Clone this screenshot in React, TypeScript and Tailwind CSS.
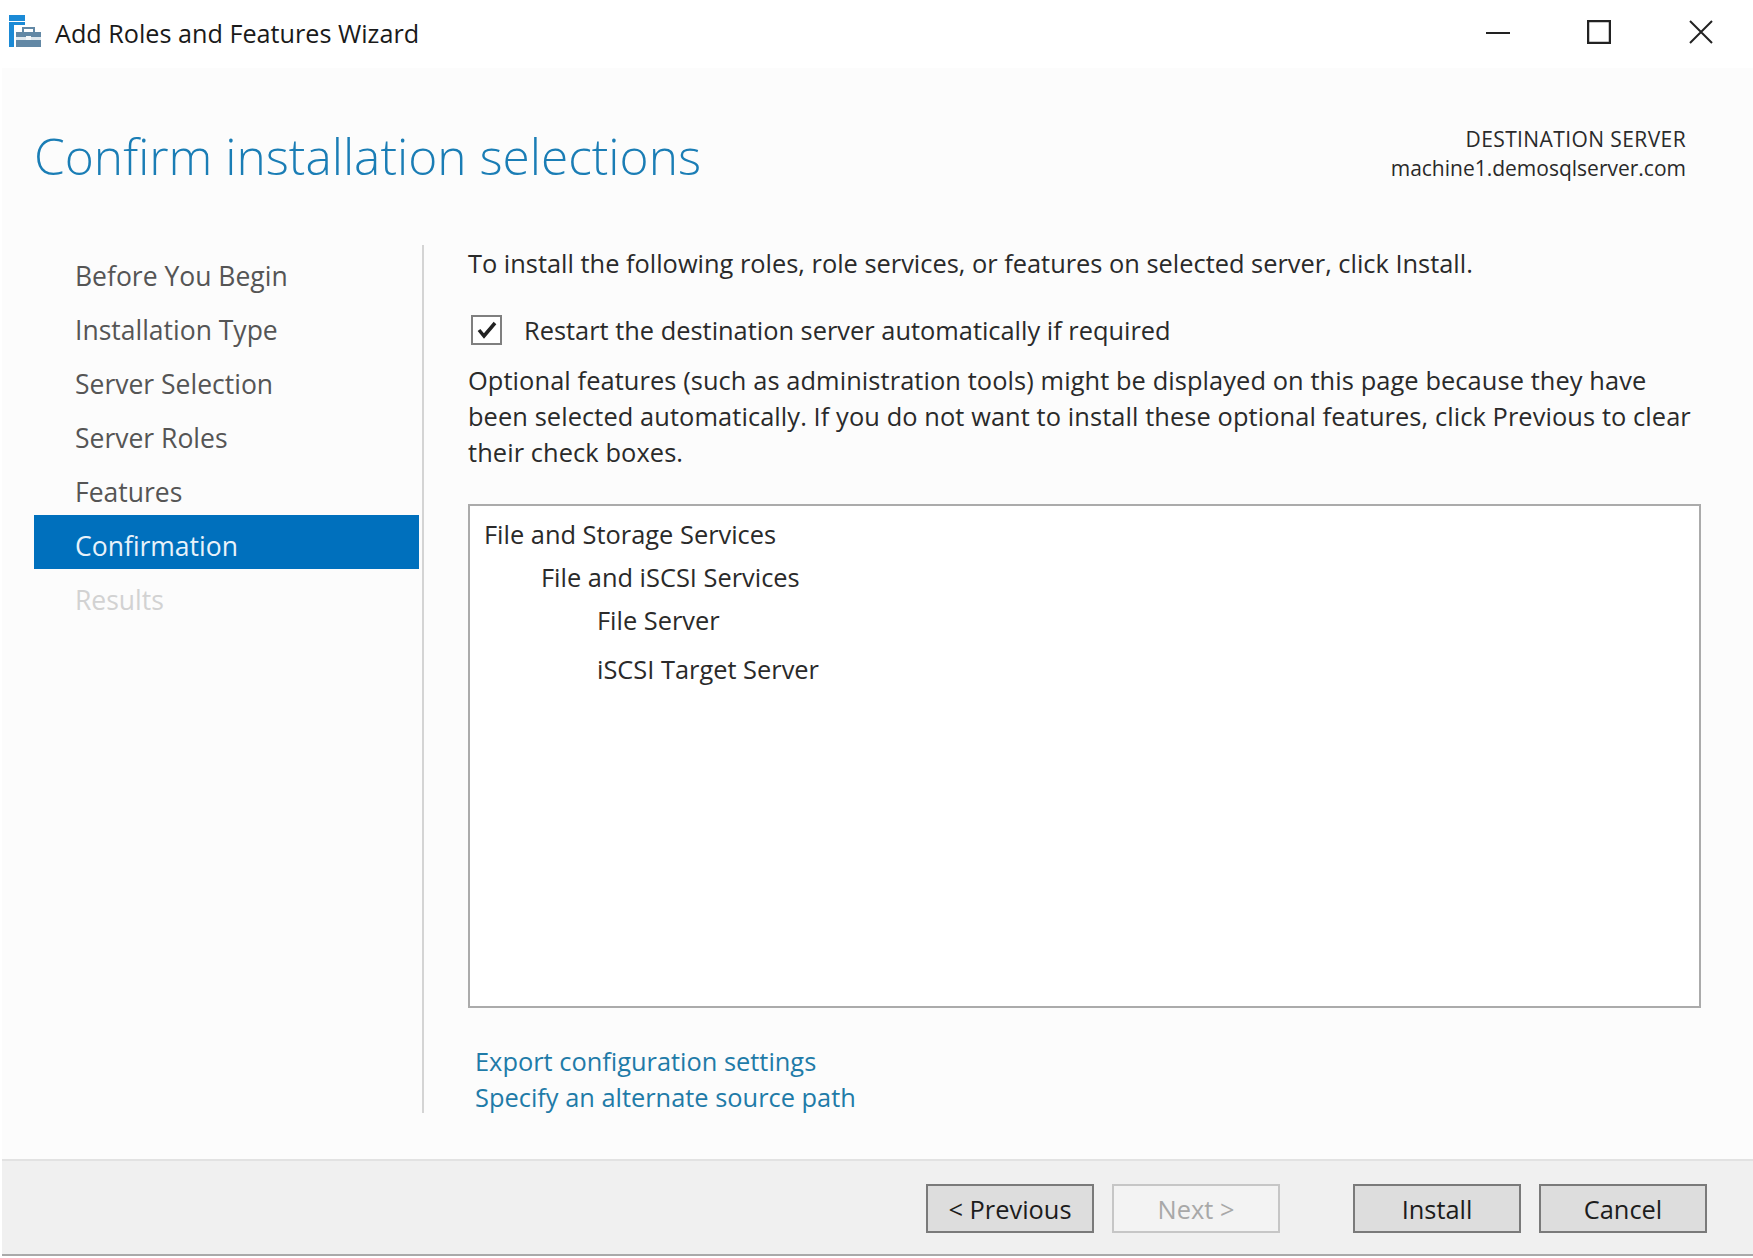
const font = "font-['Open_Sans','Noto_Sans',sans-serif]";

const steps = [
  { name: "Before You Begin", state: "normal" },
  { name: "Installation Type", state: "normal" },
  { name: "Server Selection", state: "normal" },
  { name: "Server Roles", state: "normal" },
  { name: "Features", state: "normal" },
  { name: "Confirmation", state: "active" },
  { name: "Results", state: "disabled" },
];

const tree = [
  { name: "File and Storage Services", className: "h-[43px] pl-[14px]" },
  { name: "File and iSCSI Services", className: "h-[43px] pl-[71px]" },
  { name: "File Server", className: "h-[43px] pl-[127px]" },
  { name: "iSCSI Target Server", className: "h-[55px] pl-[127px]" },
];

function AppIcon() {
  return (
    <svg width="34" height="34" viewBox="0 0 34 34" className="mb-[3px] ml-[8px] shrink-0">
      <rect x="1" y="0" width="16" height="6" fill="#1b8ad6" />
      <rect x="1" y="7" width="16" height="3" fill="#1b8ad6" />
      <rect x="1" y="10" width="5" height="22" fill="#1b8ad6" />
      <rect x="8" y="17" width="25" height="15" fill="#6288a5" />
      <rect x="8" y="22" width="25" height="3" fill="#dfe8ee" />
      <path d="M15 17v-4h11v4" fill="none" stroke="#6288a5" strokeWidth="2" />
      <rect x="18" y="21" width="5" height="4" fill="#f4f7f9" />
    </svg>
  );
}

function WindowButtons() {
  return (
    <div className="mb-[5px] flex items-center gap-[77px] pr-[40px]">
      <svg width="24" height="24" viewBox="0 0 24 24">
        <path d="M0 13h24" stroke="#222" strokeWidth="2" />
      </svg>
      <svg width="24" height="24" viewBox="0 0 24 24" className="mr-[1px]">
        <rect x="1" y="1" width="22" height="22" fill="none" stroke="#222" strokeWidth="2.5" />
      </svg>
      <svg width="24" height="24" viewBox="0 0 24 24">
        <path d="M1 1l22 22M23 1L1 23" stroke="#222" strokeWidth="2" />
      </svg>
    </div>
  );
}

function WizardButton({ label, disabled }: { label: string; disabled?: boolean }) {
  return (
    <button
      className={`flex h-[49px] w-[168px] items-center justify-center border-2 pt-[2px] text-[25.4px] ${
        disabled
          ? "border-[#c6c6c6] bg-[#f3f3f3] text-[#a8a8a8]"
          : "border-[#7a7a7a] bg-[#dddddd] text-[#1c1c1c]"
      }`}
    >
      {label}
    </button>
  );
}

export default function App() {
  return (
    <div className={`flex h-[1258px] w-[1753px] flex-col bg-white ${font}`}>
      {/* Title bar */}
      <div className="flex h-[68px] shrink-0 items-center justify-between">
        <div className="flex items-center gap-[13px]">
          <AppIcon />
          <span className="text-[25.2px] text-[#1a1a1a]">Add Roles and Features Wizard</span>
        </div>
        <WindowButtons />
      </div>

      <div className="mb-[2px] ml-[2px] flex min-h-0 flex-1 flex-col bg-[#fcfcfc]">
        {/* Header */}
        <div className="flex h-[177px] shrink-0 items-start justify-between pl-[32px] pr-[67px]">
          <h1 className="mt-[49px] text-[49.6px] font-light leading-[78px] text-[#1a7db5]">
            Confirm installation selections
          </h1>
          <div className="mt-[57px] text-right text-[21px] leading-[29px] text-[#2a2a2a]">
            <div className="tracking-[0.4px]">DESTINATION SERVER</div>
            <div>machine1.demosqlserver.com</div>
          </div>
        </div>

        <div className="flex shrink-0 items-start">
          {/* Steps */}
          <div className="flex h-[868px] w-[422px] shrink-0 flex-col border-r-2 border-[#d4d4d4] pl-[32px]">
            {steps.map((step) => (
              <div
                key={step.name}
                className={`flex h-[54px] w-[385px] items-center pl-[41px] pt-[10px] text-[26.5px] ${
                  step.state === "active"
                    ? "bg-[#0070bd] text-[#e8f2fa]"
                    : step.state === "disabled"
                      ? "text-[#d2d2d2]"
                      : "text-[#555555]"
                }`}
              >
                {step.name}
              </div>
            ))}
          </div>

          {/* Page content */}
          <div className="flex min-w-0 flex-1 flex-col pl-[44px] text-[25.4px] text-[#2a2a2a]">
            <p className="leading-[36px]">
              To install the following roles, role services, or features on selected server, click Install.
            </p>
            <label className="mt-[31px] flex h-[36px] items-center">
              <span className="ml-[3px] flex h-[30px] w-[31px] items-center justify-center border-2 border-[#7f7f7f] bg-white">
                <svg width="20" height="18" viewBox="0 0 20 18">
                  <path d="M2 9l5 6L18 2" fill="none" stroke="#222" strokeWidth="3.5" />
                </svg>
              </span>
              <span className="ml-[22px]">Restart the destination server automatically if required</span>
            </label>
            <p className="mt-[14px] whitespace-nowrap leading-[36px] tracking-[0.09px]">
              Optional features (such as administration tools) might be displayed on this page because they have
              <br />
              been selected automatically. If you do not want to install these optional features, click Previous to clear
              <br />
              their check boxes.
            </p>
            <div className="mt-[34px] h-[504px] w-[1233px] border-2 border-[#ababab] bg-white pt-[7px]">
              {tree.map((row) => (
                <div key={row.name} className={`flex items-center ${row.className}`}>
                  {row.name}
                </div>
              ))}
            </div>
            <div className="mt-[35px] flex flex-col pl-[7px] leading-[36px] text-[#1f7ba8]">
              <a>Export configuration settings</a>
              <a>Specify an alternate source path</a>
            </div>
          </div>
        </div>

        {/* Footer */}
        <div className="mt-[44px] flex min-h-0 flex-1 items-center justify-end border-t-2 border-b-2 border-t-[#e2e2e2] border-b-[#a9a9a9] bg-[#f0f0f0] pr-[46px] pt-[2px]">
          <div className="flex items-center gap-[18px]">
            <WizardButton label="< Previous" />
            <WizardButton label="Next >" disabled />
          </div>
          <div className="ml-[73px] flex items-center gap-[18px]">
            <WizardButton label="Install" />
            <WizardButton label="Cancel" />
          </div>
        </div>
      </div>
    </div>
  );
}
